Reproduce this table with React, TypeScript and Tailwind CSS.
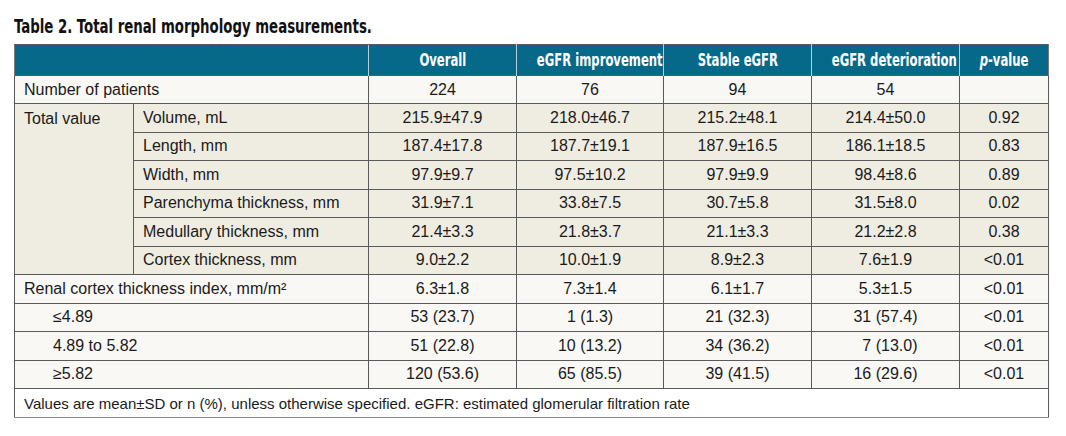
import React, { FC } from 'react';

const cond = { fontFamily: '"DejaVu Sans Condensed", "Liberation Sans", sans-serif' };
const body = { fontFamily: '"Liberation Sans", Arial, sans-serif' };

type Row = { label: string; vals: string[]; indent?: boolean };

const totals: Row[] = [
    { label: 'Volume, mL', vals: ['215.9±47.9', '218.0±46.7', '215.2±48.1', '214.4±50.0', '0.92'] },
    { label: 'Length, mm', vals: ['187.4±17.8', '187.7±19.1', '187.9±16.5', '186.1±18.5', '0.83'] },
    { label: 'Width, mm', vals: ['97.9±9.7', '97.5±10.2', '97.9±9.9', '98.4±8.6', '0.89'] },
    { label: 'Parenchyma thickness, mm', vals: ['31.9±7.1', '33.8±7.5', '30.7±5.8', '31.5±8.0', '0.02'] },
    { label: 'Medullary thickness, mm', vals: ['21.4±3.3', '21.8±3.7', '21.1±3.3', '21.2±2.8', '0.38'] },
    { label: 'Cortex thickness, mm', vals: ['9.0±2.2', '10.0±1.9', '8.9±2.3', '7.6±1.9', '<0.01'] },
];

const lower: Row[] = [
    { label: 'Renal cortex thickness index, mm/m²', vals: ['6.3±1.8', '7.3±1.4', '6.1±1.7', '5.3±1.5', '<0.01'] },
    { label: '≤4.89', indent: true, vals: ['53 (23.7)', '1 (1.3)', '21 (32.3)', '31 (57.4)', '<0.01'] },
    { label: '4.89 to 5.82', indent: true, vals: ['51 (22.8)', '10 (13.2)', '34 (36.2)', '\u20077 (13.0)', '<0.01'] },
    { label: '≥5.82', indent: true, vals: ['120 (53.6)', '65 (85.5)', '39 (41.5)', '16 (29.6)', '<0.01'] },
];

const td = 'border border-[#5a5a5a] text-center text-[16px] text-[#1a1a1a] leading-none';
const th = 'border-x border-t border-x-[#b9cdd6] border-t-[#5a5a5a] text-white text-[17px] font-bold text-center leading-none whitespace-nowrap';

// narrow bold heading text, the reference face is a tight condensed gothic
const Narrow: FC<{ children: React.ReactNode }> = ({ children }) => (
    <span className="inline-block scale-x-[0.76] whitespace-nowrap" style={cond}>{children}</span>
);

const App: FC = () => {
    return (
        <div className="w-[1066px] h-[436px] bg-white pt-[16px] pl-[14px]" style={body}>
            <h1 className="text-[20px] font-bold text-[#111] leading-none mb-[8px] whitespace-nowrap" style={cond}>
                <span className="inline-block scale-x-[0.74] origin-left">Table 2. Total renal morphology measurements.</span>
            </h1>
            <table className="border-collapse table-fixed w-[1034px] border border-[#7a7a7a]">
                <colgroup>
                    <col className="w-[119px]" />
                    <col className="w-[235px]" />
                    <col className="w-[148px]" />
                    <col className="w-[147px]" />
                    <col className="w-[148px]" />
                    <col className="w-[148px]" />
                    <col className="w-[89px]" />
                </colgroup>
                <thead>
                    <tr className="h-[31px] bg-[#06698a]">
                        <th colSpan={2} className="border-l border-[#7a7a7a] border-t border-t-[#5a5a5a]"></th>
                        <th className={th}><Narrow>Overall</Narrow></th>
                        <th className={th}><Narrow>eGFR improvement</Narrow></th>
                        <th className={th}><Narrow>Stable eGFR</Narrow></th>
                        <th className={th}><Narrow>eGFR deterioration</Narrow></th>
                        <th className={th + ' border-r-[#7a7a7a]'}><Narrow><i>p</i>-value</Narrow></th>
                    </tr>
                </thead>
                <tbody>
                    <tr className="h-[28px] bg-[#f9f8f4]">
                        <td colSpan={2} className={td + ' text-left pl-[9px]'}>Number of patients</td>
                        <td className={td}>224</td>
                        <td className={td}>76</td>
                        <td className={td}>94</td>
                        <td className={td}>54</td>
                        <td className={td}></td>
                    </tr>
                    {totals.map((r, i) => (
                        <tr key={r.label} className="h-[28.5px] bg-[#efece2]">
                            {i === 0 && (
                                <td rowSpan={6} className={td + ' text-left align-top pl-[9px] pt-[7px]'}>Total value</td>
                            )}
                            <td className={td + ' text-left pl-[9px]'}>{r.label}</td>
                            {r.vals.map((v, j) => (
                                <td key={j} className={td}>{v}</td>
                            ))}
                        </tr>
                    ))}
                    {lower.map((r) => (
                        <tr key={r.label} className="h-[28.5px] bg-[#f9f8f4]">
                            <td colSpan={2} className={td + (r.indent ? ' text-left pl-[38px]' : ' text-left pl-[9px]')}>{r.label}</td>
                            {r.vals.map((v, j) => (
                                <td key={j} className={td}>{v}</td>
                            ))}
                        </tr>
                    ))}
                    <tr className="h-[29px] bg-white">
                        <td colSpan={7} className="border border-[#5a5a5a] border-b-[#8a8a8a] text-left pl-[9px] text-[15px] text-[#1a1a1a] leading-none">
                            Values are mean±SD or n (%), unless otherwise specified. eGFR: estimated glomerular filtration rate
                        </td>
                    </tr>
                </tbody>
            </table>
        </div>
    );
};

export default App;
